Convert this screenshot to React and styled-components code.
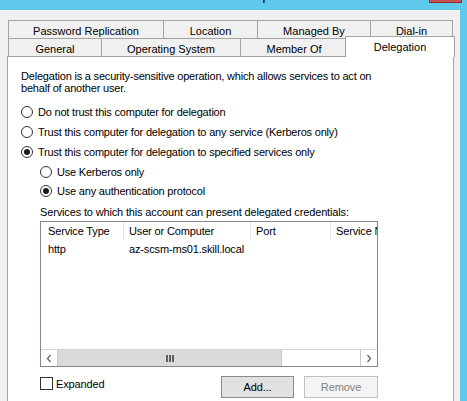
import React from "react";
import styled, { createGlobalStyle } from "styled-components";

const Global = createGlobalStyle`
  html, body { margin: 0; padding: 0; background: #f0f0f0; }
  body { font-family: "Liberation Sans", Arial, sans-serif; font-size: 11px; color: #000; }
  * { box-sizing: border-box; }
`;

const Window = styled.div`
  width: 467px;
  height: 401px;
  overflow: hidden;
  display: flex;
  flex-direction: column;
  background: #f0f0f0;
`;

const TitleBar = styled.div`
  height: 10px;
  flex: none;
  background: #60c8ea;
  display: flex;
  align-items: flex-start;
  overflow: hidden;
`;

const Title = styled.div`
  flex: 1;
  text-align: center;
  font-family: "Liberation Sans", Arial, sans-serif;
  font-size: 15px;
  line-height: 15px;
  margin-top: -13px;
  padding-left: 30px;
  color: #111;
`;

const CloseButton = styled.div`
  width: 33px;
  height: 4px;
  margin-top: -1px;
  margin-right: 5px;
  background: #c75050;
  border: 1px solid #8e2e2e;
  border-top: none;
`;

const Frame = styled.div`
  flex: 1;
  display: flex;
  min-height: 0;
`;

const Client = styled.div`
  flex: 1;
  display: flex;
  flex-direction: column;
  padding: 10px 6px 0 7px;
`;

const RightEdge = styled.div`
  width: 7px;
  flex: none;
  background: #60c8ea;
`;

const TabRow = styled.div`
  display: flex;
  height: 18px;
  align-items: flex-end;
  padding-left: 1px;
`;

const Tab = styled.div`
  position: relative;
  width: ${(p) => p.$w}px;
  height: ${(p) => (p.$selected ? 21 : 18)}px;
  margin-right: -1px;
  margin-left: ${(p) => (p.$selected ? -2 : 0)}px;
  margin-bottom: ${(p) => (p.$selected ? -1 : 0)}px;
  z-index: ${(p) => (p.$selected ? 2 : 1)};
  border: 1px solid #a3a3a3;
  border-bottom: none;
  background: ${(p) => (p.$selected ? "#ffffff" : "#f0f0f0")};
  display: flex;
  align-items: center;
  justify-content: center;
  padding-top: ${(p) => (p.$selected ? 0 : 2)}px;
  white-space: nowrap;
`;

const Panel = styled.div`
  height: 370px;
  flex: none;
  border: 1px solid #a3a3a3;
  background: #ffffff;
  padding: 13px 0 0 13px;
`;

const Paragraph = styled.p`
  margin: 0;
  line-height: 12px;
  width: 360px;
  letter-spacing: -0.2px;
`;

const Options = styled.div`
  margin-top: 8px;
  display: flex;
  flex-direction: column;
`;

const SubGroup = styled.div`
  margin-left: 19px;
  display: flex;
  flex-direction: column;
`;

const OptionRow = styled.label`
  display: flex;
  align-items: center;
  height: ${(p) => p.$h || 20}px;
  gap: 5px;
  letter-spacing: -0.2px;
`;

const RadioCircle = styled.span`
  width: 12px;
  height: 12px;
  border-radius: 50%;
  border: 1px solid #333333;
  background: #fff;
  display: flex;
  align-items: center;
  justify-content: center;
  flex: none;
  &::after {
    content: "";
    width: 6px;
    height: 6px;
    border-radius: 50%;
    background: ${(p) => (p.$checked ? "#1a1a1a" : "transparent")};
  }
`;

const Label = styled.div`
  margin: 5px 0 0 19px;
  line-height: 14px;
  letter-spacing: -0.15px;
`;

const ListBox = styled.div`
  margin: 2px 0 0 19px;
  width: 338px;
  height: 146px;
  border: 1px solid #828790;
  display: flex;
  flex-direction: column;
  background: #fff;
`;

const HeaderRow = styled.div`
  display: flex;
  height: 18px;
  flex: none;
`;

const HeaderCell = styled.div`
  width: ${(p) => (p.$w ? `${p.$w}px` : "auto")};
  flex: ${(p) => (p.$w ? "none" : "1")};
  border-right: ${(p) => (p.$w ? "1px solid #e5e5e5" : "none")};
  padding-left: ${(p) => (p.$first ? 7 : 5)}px;
  display: flex;
  align-items: center;
  white-space: nowrap;
  overflow: hidden;
  letter-spacing: -0.15px;
`;

const DataRow = styled.div`
  display: flex;
  height: 17px;
  flex: none;
`;

const DataCell = styled.div`
  width: ${(p) => p.$w}px;
  flex: none;
  padding-left: ${(p) => (p.$first ? 7 : 5)}px;
  display: flex;
  align-items: center;
  white-space: nowrap;
  letter-spacing: -0.15px;
`;

const ListFill = styled.div`
  flex: 1;
`;

const ScrollBar = styled.div`
  height: 17px;
  flex: none;
  display: flex;
  border-top: 1px solid #d4d4d4;
  background: #ffffff;
`;

const ScrollButton = styled.div`
  width: 17px;
  flex: none;
  display: flex;
  align-items: center;
  justify-content: center;
  border-right: ${(p) => (p.$side === "left" ? "1px solid #c9c9c9" : "none")};
  border-left: ${(p) => (p.$side === "right" ? "1px solid #c9c9c9" : "none")};
  background: #fff;
`;

const Thumb = styled.div`
  width: ${(p) => p.$w}px;
  flex: none;
  background: #dadada;
  border-right: 1px solid #c9c9c9;
  display: flex;
  align-items: center;
  justify-content: center;
  gap: 1px;
`;

const Grip = styled.span`
  width: 2px;
  height: 7px;
  background: #606060;
`;

const Track = styled.div`
  flex: 1;
  background: #fff;
`;

const BottomRow = styled.div`
  margin: 9px 0 0 19px;
  width: 338px;
  display: flex;
  align-items: flex-start;
`;

const CheckRow = styled.label`
  display: flex;
  align-items: center;
  gap: 3px;
  margin-top: 1px;
  height: 13px;
  flex: 1;
  letter-spacing: -0.15px;
`;

const CheckBox = styled.span`
  width: 13px;
  height: 13px;
  border: 1px solid #333333;
  background: #fff;
  flex: none;
`;

const Button = styled.div`
  width: ${(p) => p.$w}px;
  height: 22px;
  margin-left: ${(p) => p.$ml || 0}px;
  display: flex;
  align-items: center;
  justify-content: center;
  background: ${(p) => (p.$disabled ? "#f4f4f4" : "#e1e1e1")};
  border: 1px solid ${(p) => (p.$disabled ? "#bfbfbf" : "#8a8a8a")};
  color: ${(p) => (p.$disabled ? "#838383" : "#000")};
  letter-spacing: -0.1px;
`;

const Radio = ({ checked, children, h }) => (
  <OptionRow $h={h}>
    <RadioCircle $checked={checked} />
    <span>{children}</span>
  </OptionRow>
);

const Chevron = ({ dir }) => (
  <svg width="6" height="9" viewBox="0 0 6 9">
    <polyline
      points={dir === "left" ? "4.5,1 1.5,4.5 4.5,8" : "1.5,1 4.5,4.5 1.5,8"}
      fill="none"
      stroke="#606060"
      strokeWidth="1.2"
    />
  </svg>
);

export default function App() {
  return (
    <>
      <Global />
      <Window>
        <TitleBar>
          <Title>SKILL-11-02 Properties</Title>
          <CloseButton />
        </TitleBar>
        <Frame>
          <Client>
            <TabRow>
              <Tab $w={156}>Password Replication</Tab>
              <Tab $w={95}>Location</Tab>
              <Tab $w={114}>Managed By</Tab>
              <Tab $w={83}>Dial-in</Tab>
            </TabRow>
            <TabRow>
              <Tab $w={94}>General</Tab>
              <Tab $w={140}>Operating System</Tab>
              <Tab $w={108}>Member Of</Tab>
              <Tab $w={110} $selected>
                Delegation
              </Tab>
            </TabRow>
            <Panel>
              <Paragraph>
                Delegation is a security-sensitive operation, which allows services to act on behalf of another
                user.
              </Paragraph>
              <Options>
                <Radio>Do not trust this computer for delegation</Radio>
                <Radio>Trust this computer for delegation to any service (Kerberos only)</Radio>
                <Radio checked>Trust this computer for delegation to specified services only</Radio>
                <SubGroup>
                  <Radio h={19}>Use Kerberos only</Radio>
                  <Radio h={19} checked>
                    Use any authentication protocol
                  </Radio>
                </SubGroup>
              </Options>
              <Label>Services to which this account can present delegated credentials:</Label>
              <ListBox>
                <HeaderRow>
                  <HeaderCell $w={83} $first>
                    Service Type
                  </HeaderCell>
                  <HeaderCell $w={127}>User or Computer</HeaderCell>
                  <HeaderCell $w={80}>Port</HeaderCell>
                  <HeaderCell>Service Name</HeaderCell>
                </HeaderRow>
                <DataRow>
                  <DataCell $w={83} $first>
                    http
                  </DataCell>
                  <DataCell $w={127}>az-scsm-ms01.skill.local</DataCell>
                </DataRow>
                <ListFill />
                <ScrollBar>
                  <ScrollButton $side="left">
                    <Chevron dir="left" />
                  </ScrollButton>
                  <Thumb $w={224}>
                    <Grip />
                    <Grip />
                    <Grip />
                  </Thumb>
                  <Track />
                  <ScrollButton $side="right">
                    <Chevron dir="right" />
                  </ScrollButton>
                </ScrollBar>
              </ListBox>
              <BottomRow>
                <CheckRow>
                  <CheckBox />
                  <span>Expanded</span>
                </CheckRow>
                <Button $w={73}>Add...</Button>
                <Button $w={74} $ml={10} $disabled>
                  Remove
                </Button>
              </BottomRow>
            </Panel>
          </Client>
          <RightEdge />
        </Frame>
      </Window>
    </>
  );
}
